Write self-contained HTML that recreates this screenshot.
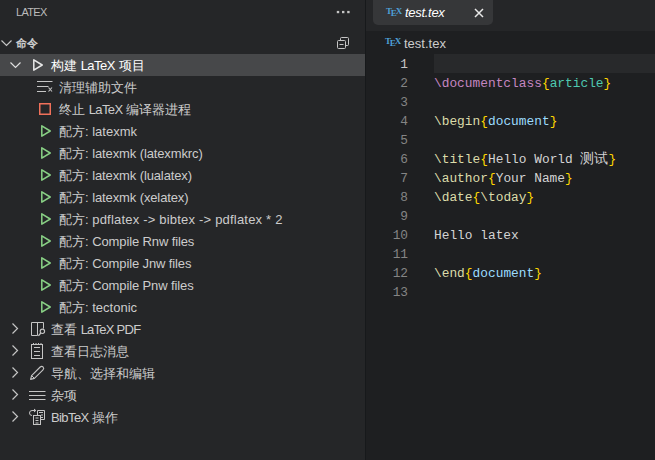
<!DOCTYPE html>
<html><head><meta charset="utf-8">
<style>
*{margin:0;padding:0;box-sizing:border-box}
html,body{width:655px;height:460px;overflow:hidden;background:#252628;font-family:"Liberation Sans",sans-serif;}
.abs{position:absolute}
#side{position:absolute;left:0;top:0;width:365px;height:460px;background:#252628}
#div{position:absolute;left:365px;top:0;width:1px;height:460px;background:#17191b}
#ed{position:absolute;left:366px;top:0;width:289px;height:460px;background:#1e1f21}
#tabbar{position:absolute;left:0;top:0;width:289px;height:31px;background:#252628}
#tab{position:absolute;left:7px;top:-6px;width:120px;height:31px;background:#363739;border-radius:5px}
.t{position:absolute;white-space:nowrap;color:#cccccc;font-size:13px;line-height:23px;height:22px}
.row{position:absolute;left:0;width:365px;height:22px}
.code{position:absolute;left:68px;white-space:pre;font-family:"Liberation Mono",monospace;font-size:12.85px;line-height:19px;height:19px;color:#d4d4d4}
.ln{position:absolute;left:0;width:42px;text-align:right;font-family:"Liberation Mono",monospace;font-size:12.8px;line-height:19px;color:#858585}
.k{color:#c586c0}.b{color:#ffd700}.c{color:#4ec9b0}.v{color:#9cdcfe}.f{color:#dcdcaa}
svg{position:absolute;overflow:visible}
.tex{position:absolute;font-family:"Liberation Serif",serif;font-size:9px;line-height:9px;color:#4e9fd6;white-space:nowrap;letter-spacing:-1.2px;font-weight:bold}
.tex span{position:relative;top:2px}
</style></head><body>
<div id="side">
  <div class="t" style="left:16px;top:1px;font-size:11px;letter-spacing:-0.7px;color:#bbbbbb">LATEX</div>
  <!-- dots -->
  <svg style="left:336px;top:10px" width="15" height="4" viewBox="0 0 15 4"><rect x="0.8" y="0.9" width="2.4" height="2.3" fill="#c5c5c5"/><rect x="6" y="0.9" width="2.4" height="2.3" fill="#c5c5c5"/><rect x="11.2" y="0.9" width="2.4" height="2.3" fill="#c5c5c5"/></svg>
  <!-- section header -->
  <svg style="left:1px;top:40px" width="11" height="6" viewBox="0 0 11 6"><path d="M0.5 0.5 L5.5 5.5 L10.5 0.5" fill="none" stroke="#c5c5c5" stroke-width="1.2"/></svg>
  <div class="t" style="left:16px;top:32px;font-size:11px;font-weight:600;color:#cccccc">命令</div>
  <svg style="left:337px;top:37px" width="12" height="12" viewBox="0 0 12 12"><rect x="0.5" y="3.5" width="8" height="8" rx="1" fill="none" stroke="#c5c5c5"/><path d="M3.5 3.5 V1.5 Q3.5 0.5 4.5 0.5 H10.5 Q11.5 0.5 11.5 1.5 V7.5 Q11.5 8.5 10.5 8.5 H8.5" fill="none" stroke="#c5c5c5"/><path d="M2.5 7.5 H6.5" stroke="#c5c5c5"/></svg>

  <div class="row" style="top:54px;background:#47484a"></div>
  <svg style="left:10px;top:62px" width="11" height="6" viewBox="0 0 11 6"><path d="M0.5 0.5 L5.5 5.5 L10.5 0.5" fill="none" stroke="#e0e0e0" stroke-width="1.2"/></svg>
  <svg style="left:33px;top:59px" width="10" height="12" viewBox="0 0 10 12"><path d="M0.8 0.8 L9.2 6 L0.8 11.2 Z" fill="none" stroke="#e8e8e8" stroke-width="1.5" stroke-linejoin="round"/></svg>
  <div class="t" style="left:51px;top:54px;color:#ffffff">构建 <span style="letter-spacing:-0.5px">LaTeX</span> 项目</div>

  <!-- clean -->
  <svg style="left:37px;top:81px" width="16" height="11" viewBox="0 0 16 11"><path d="M0 0.5 H15.5 M0 5.5 H11.5 M0 10.5 H9" stroke="#c5c5c5"/><path d="M11.5 6.5 L15 10.5 M15 6.5 L11.5 10.5" stroke="#c5c5c5" stroke-width="1.1"/></svg>
  <div class="t" style="left:59px;top:76px">清理辅助文件</div>
  <!-- stop -->
  <svg style="left:39px;top:103px" width="12" height="12" viewBox="0 0 12 12"><rect x="0.75" y="0.75" width="10.5" height="10.5" fill="none" stroke="#f0705a" stroke-width="1.5"/></svg>
  <div class="t" style="left:59px;top:98px">终止 <span style="letter-spacing:-0.6px">LaTeX</span> 编译器进程</div>

  <!-- recipes -->
  <div id="recipes"></div>
  <svg style="left:41px;top:125px" width="10" height="12" viewBox="0 0 10 12"><path d="M0.8 0.8 L9.2 6 L0.8 11.2 Z" fill="none" stroke="#89d185" stroke-width="1.5" stroke-linejoin="round"/></svg>
  <div class="t" style="left:59px;top:120px">配方: latexmk</div>
  <svg style="left:41px;top:147px" width="10" height="12" viewBox="0 0 10 12"><path d="M0.8 0.8 L9.2 6 L0.8 11.2 Z" fill="none" stroke="#89d185" stroke-width="1.5" stroke-linejoin="round"/></svg>
  <div class="t" style="left:59px;top:142px">配方: <span style="letter-spacing:-0.12px">latexmk (latexmkrc)</span></div>
  <svg style="left:41px;top:169px" width="10" height="12" viewBox="0 0 10 12"><path d="M0.8 0.8 L9.2 6 L0.8 11.2 Z" fill="none" stroke="#89d185" stroke-width="1.5" stroke-linejoin="round"/></svg>
  <div class="t" style="left:59px;top:164px">配方: <span style="letter-spacing:-0.12px">latexmk (lualatex)</span></div>
  <svg style="left:41px;top:191px" width="10" height="12" viewBox="0 0 10 12"><path d="M0.8 0.8 L9.2 6 L0.8 11.2 Z" fill="none" stroke="#89d185" stroke-width="1.5" stroke-linejoin="round"/></svg>
  <div class="t" style="left:59px;top:186px">配方: <span style="letter-spacing:-0.12px">latexmk (xelatex)</span></div>
  <svg style="left:41px;top:213px" width="10" height="12" viewBox="0 0 10 12"><path d="M0.8 0.8 L9.2 6 L0.8 11.2 Z" fill="none" stroke="#89d185" stroke-width="1.5" stroke-linejoin="round"/></svg>
  <div class="t" style="left:59px;top:208px">配方: <span style="letter-spacing:0.2px">pdflatex -&gt; bibtex -&gt; pdflatex * 2</span></div>
  <svg style="left:41px;top:235px" width="10" height="12" viewBox="0 0 10 12"><path d="M0.8 0.8 L9.2 6 L0.8 11.2 Z" fill="none" stroke="#89d185" stroke-width="1.5" stroke-linejoin="round"/></svg>
  <div class="t" style="left:59px;top:230px">配方: <span style="letter-spacing:-0.12px">Compile Rnw files</span></div>
  <svg style="left:41px;top:257px" width="10" height="12" viewBox="0 0 10 12"><path d="M0.8 0.8 L9.2 6 L0.8 11.2 Z" fill="none" stroke="#89d185" stroke-width="1.5" stroke-linejoin="round"/></svg>
  <div class="t" style="left:59px;top:252px">配方: <span style="letter-spacing:-0.12px">Compile Jnw files</span></div>
  <svg style="left:41px;top:279px" width="10" height="12" viewBox="0 0 10 12"><path d="M0.8 0.8 L9.2 6 L0.8 11.2 Z" fill="none" stroke="#89d185" stroke-width="1.5" stroke-linejoin="round"/></svg>
  <div class="t" style="left:59px;top:274px">配方: <span style="letter-spacing:-0.12px">Compile Pnw files</span></div>
  <svg style="left:41px;top:301px" width="10" height="12" viewBox="0 0 10 12"><path d="M0.8 0.8 L9.2 6 L0.8 11.2 Z" fill="none" stroke="#89d185" stroke-width="1.5" stroke-linejoin="round"/></svg>
  <div class="t" style="left:59px;top:296px">配方: tectonic</div>

  <!-- collapsed groups -->
  <svg style="left:12px;top:323px" width="6" height="11" viewBox="0 0 6 11"><path d="M0.5 0.5 L5.5 5.5 L0.5 10.5" fill="none" stroke="#c5c5c5" stroke-width="1.2"/></svg>
  <svg style="left:29px;top:321px" width="16" height="16" viewBox="0 0 16 16"><path d="M2.5 1.5 H14.5 V7.6 M2.5 1.5 V14.5 H8.5 V1.5" fill="none" stroke="#c5c5c5"/><circle cx="13.4" cy="10.3" r="2.2" fill="none" stroke="#c5c5c5" stroke-width="1.1"/><path d="M11.8 12 L9.4 14.8" stroke="#c5c5c5" stroke-width="1.3"/></svg>
  <div class="t" style="left:51px;top:318px">查看 <span style="letter-spacing:-0.75px">LaTeX PDF</span></div>
  <svg style="left:12px;top:345px" width="6" height="11" viewBox="0 0 6 11"><path d="M0.5 0.5 L5.5 5.5 L0.5 10.5" fill="none" stroke="#c5c5c5" stroke-width="1.2"/></svg>
  <svg style="left:29px;top:343px" width="16" height="16" viewBox="0 0 16 16"><rect x="2.5" y="1.5" width="11" height="14" fill="none" stroke="#c5c5c5"/><path d="M4.5 0 V1.5 M7 0 V1.5 M9.5 0 V1.5 M12 0 V1.5" stroke="#c5c5c5"/><path d="M5 4.5 H11 M5 8.5 H11 M5 12.5 H11" stroke="#c5c5c5"/></svg>
  <div class="t" style="left:51px;top:340px">查看日志消息</div>
  <svg style="left:12px;top:367px" width="6" height="11" viewBox="0 0 6 11"><path d="M0.5 0.5 L5.5 5.5 L0.5 10.5" fill="none" stroke="#c5c5c5" stroke-width="1.2"/></svg>
  <svg style="left:29px;top:365px" width="16" height="16" viewBox="0 0 16 16"><path d="M1.6 14.4 L2.6 10.6 L11.2 2 Q12.7 0.6 14.1 2 Q15.4 3.4 14 4.8 L5.4 13.4 Z" fill="none" stroke="#c5c5c5" stroke-width="1.1" stroke-linejoin="round"/><path d="M2.6 10.6 L5.4 13.4" stroke="#c5c5c5" stroke-width="1"/></svg>
  <div class="t" style="left:51px;top:362px">导航、选择和编辑</div>
  <svg style="left:12px;top:389px" width="6" height="11" viewBox="0 0 6 11"><path d="M0.5 0.5 L5.5 5.5 L0.5 10.5" fill="none" stroke="#c5c5c5" stroke-width="1.2"/></svg>
  <svg style="left:29px;top:387px" width="17" height="16" viewBox="0 0 17 16"><path d="M0 4.5 H16.5 M0 8.5 H16.5 M0 12.5 H16.5" stroke="#c5c5c5"/></svg>
  <div class="t" style="left:51px;top:384px">杂项</div>
  <svg style="left:12px;top:411px" width="6" height="11" viewBox="0 0 6 11"><path d="M0.5 0.5 L5.5 5.5 L0.5 10.5" fill="none" stroke="#c5c5c5" stroke-width="1.2"/></svg>
  <svg style="left:29px;top:405px" width="17" height="20" viewBox="0 0 17 20"><path d="M3 10.5 Q0.5 10.5 0.5 8 Q0.5 5.5 3 5.5 H6.5 M5 4 L6.8 5.5 L5 7" fill="none" stroke="#c5c5c5"/><path d="M8.5 10 V5.5 H15.5 V14.5 H11.5" fill="none" stroke="#c5c5c5"/><path d="M10 7.5 H14 M12 10 H14 M12 12.5 H14" stroke="#c5c5c5"/><rect x="4.5" y="10.5" width="7" height="9" fill="none" stroke="#c5c5c5"/><path d="M6.5 13 H9.5 M6.5 15.5 H9.5 M6.5 18 H9.5" stroke="#c5c5c5"/></svg>
  <div class="t" style="left:51px;top:406px"><span style="letter-spacing:-0.6px">BibTeX</span> 操作</div>
</div>
<div id="div"></div>
<div id="ed">
  <div id="tabbar"><div id="tab"></div></div>
  <div class="tex" style="left:20px;top:7px">T<span>E</span>X</div>
  <div class="t" style="left:39px;top:1px;font-style:italic;letter-spacing:-0.3px;color:#ffffff">test.tex</div>
  <svg style="left:108px;top:8px" width="10" height="10" viewBox="0 0 10 10"><path d="M1 1 L9 9 M9 1 L1 9" stroke="#e8e8e8" stroke-width="1.5"/></svg>
  <div class="tex" style="left:19px;top:37px">T<span>E</span>X</div>
  <div class="t" style="left:38px;top:32px;color:#cccccc">test.tex</div>
  <div class="abs" style="left:68px;top:54px;width:221px;height:19px;background:#28292b"></div>
  <div class="ln" style="top:55px;color:#c6c6c6">1</div>
  <div class="ln" style="top:74px">2</div>
  <div class="ln" style="top:93px">3</div>
  <div class="ln" style="top:112px">4</div>
  <div class="ln" style="top:131px">5</div>
  <div class="ln" style="top:150px">6</div>
  <div class="ln" style="top:169px">7</div>
  <div class="ln" style="top:188px">8</div>
  <div class="ln" style="top:207px">9</div>
  <div class="ln" style="top:226px">10</div>
  <div class="ln" style="top:245px">11</div>
  <div class="ln" style="top:264px">12</div>
  <div class="ln" style="top:283px">13</div>
  <div class="code" style="top:74px"><span class="k">\documentclass</span><span class="b">{</span><span class="c">article</span><span class="b">}</span></div>
  <div class="code" style="top:112px"><span class="f">\begin</span><span class="b">{</span><span class="v">document</span><span class="b">}</span></div>
  <div class="code" style="top:150px"><span class="f">\title</span><span class="b">{</span>Hello World <span style="font-size:14px;line-height:19px">测试</span><span class="b">}</span></div>
  <div class="code" style="top:169px"><span class="f">\author</span><span class="b">{</span>Your Name<span class="b">}</span></div>
  <div class="code" style="top:188px"><span class="f">\date</span><span class="b">{</span><span class="f">\today</span><span class="b">}</span></div>
  <div class="code" style="top:226px">Hello latex</div>
  <div class="code" style="top:264px"><span class="f">\end</span><span class="b">{</span><span class="v">document</span><span class="b">}</span></div>
</div>
</body></html>
